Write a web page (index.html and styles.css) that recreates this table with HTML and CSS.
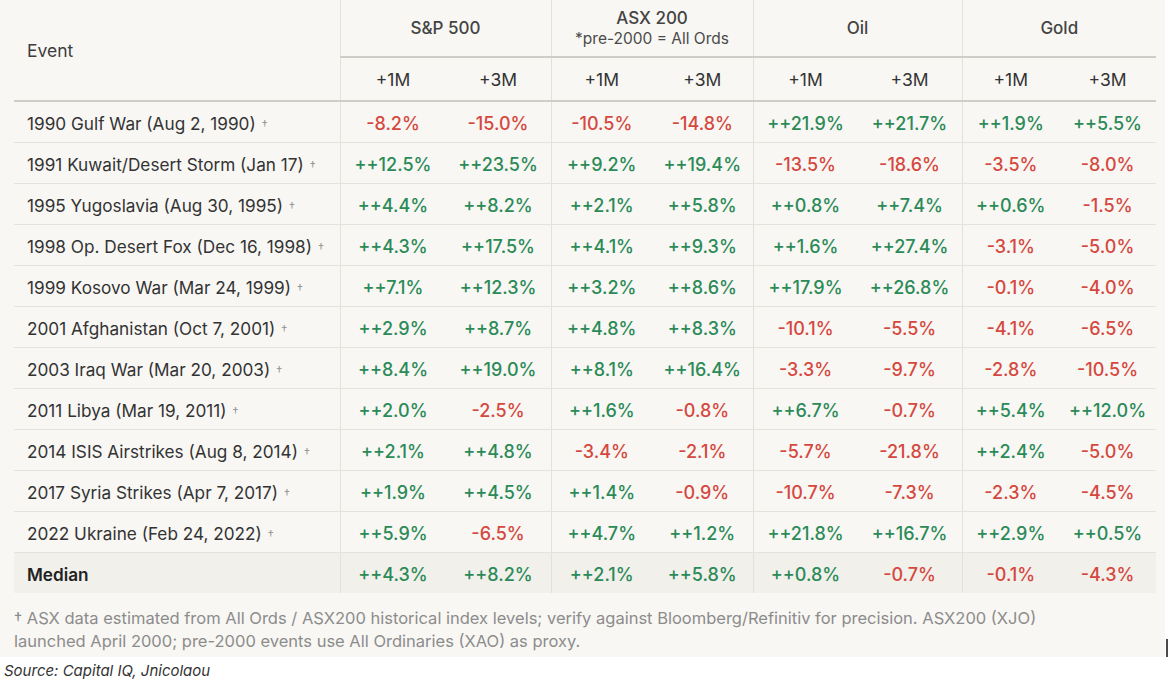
FILE: index.html
```html
<!DOCTYPE html>
<html lang="en">
<head>
<meta charset="utf-8">
<title>Markets after geopolitical events</title>
<link rel="stylesheet" href="styles.css">
</head>
<body>
<div class="page">
  <div class="panel">
    <table class="returns">
      <colgroup>
        <col class="c-event">
        <col class="c-sp"><col class="c-sp">
        <col class="c-asx"><col class="c-asx">
        <col class="c-oil"><col class="c-oil">
        <col class="c-gold"><col class="c-gold">
      </colgroup>
      <thead>
        <tr class="h-top">
          <th rowspan="2" class="event-h">Event</th>
          <th colspan="2" class="grp">S&amp;P 500</th>
          <th colspan="2" class="grp grp-two"><span class="grp-name">ASX 200</span><span class="grp-note">*pre-2000 = All Ords</span></th>
          <th colspan="2" class="grp">Oil</th>
          <th colspan="2" class="grp">Gold</th>
        </tr>
        <tr class="h-sub">
          <th class="sub l">+1M</th><th class="sub">+3M</th>
          <th class="sub l">+1M</th><th class="sub">+3M</th>
          <th class="sub l">+1M</th><th class="sub">+3M</th>
          <th class="sub l">+1M</th><th class="sub">+3M</th>
        </tr>
      </thead>
      <tbody>
        <tr><td class="ev">1990 Gulf War (Aug 2, 1990)<span class="dag">†</span></td>
          <td class="v neg l">-8.2%</td><td class="v neg">-15.0%</td>
          <td class="v neg l">-10.5%</td><td class="v neg">-14.8%</td>
          <td class="v pos l">++21.9%</td><td class="v pos">++21.7%</td>
          <td class="v pos l">++1.9%</td><td class="v pos">++5.5%</td></tr>
        <tr><td class="ev">1991 Kuwait/Desert Storm (Jan 17)<span class="dag">†</span></td>
          <td class="v pos l">++12.5%</td><td class="v pos">++23.5%</td>
          <td class="v pos l">++9.2%</td><td class="v pos">++19.4%</td>
          <td class="v neg l">-13.5%</td><td class="v neg">-18.6%</td>
          <td class="v neg l">-3.5%</td><td class="v neg">-8.0%</td></tr>
        <tr><td class="ev">1995 Yugoslavia (Aug 30, 1995)<span class="dag">†</span></td>
          <td class="v pos l">++4.4%</td><td class="v pos">++8.2%</td>
          <td class="v pos l">++2.1%</td><td class="v pos">++5.8%</td>
          <td class="v pos l">++0.8%</td><td class="v pos">++7.4%</td>
          <td class="v pos l">++0.6%</td><td class="v neg">-1.5%</td></tr>
        <tr><td class="ev">1998 Op. Desert Fox (Dec 16, 1998)<span class="dag">†</span></td>
          <td class="v pos l">++4.3%</td><td class="v pos">++17.5%</td>
          <td class="v pos l">++4.1%</td><td class="v pos">++9.3%</td>
          <td class="v pos l">++1.6%</td><td class="v pos">++27.4%</td>
          <td class="v neg l">-3.1%</td><td class="v neg">-5.0%</td></tr>
        <tr><td class="ev">1999 Kosovo War (Mar 24, 1999)<span class="dag">†</span></td>
          <td class="v pos l">++7.1%</td><td class="v pos">++12.3%</td>
          <td class="v pos l">++3.2%</td><td class="v pos">++8.6%</td>
          <td class="v pos l">++17.9%</td><td class="v pos">++26.8%</td>
          <td class="v neg l">-0.1%</td><td class="v neg">-4.0%</td></tr>
        <tr><td class="ev">2001 Afghanistan (Oct 7, 2001)<span class="dag">†</span></td>
          <td class="v pos l">++2.9%</td><td class="v pos">++8.7%</td>
          <td class="v pos l">++4.8%</td><td class="v pos">++8.3%</td>
          <td class="v neg l">-10.1%</td><td class="v neg">-5.5%</td>
          <td class="v neg l">-4.1%</td><td class="v neg">-6.5%</td></tr>
        <tr><td class="ev">2003 Iraq War (Mar 20, 2003)<span class="dag">†</span></td>
          <td class="v pos l">++8.4%</td><td class="v pos">++19.0%</td>
          <td class="v pos l">++8.1%</td><td class="v pos">++16.4%</td>
          <td class="v neg l">-3.3%</td><td class="v neg">-9.7%</td>
          <td class="v neg l">-2.8%</td><td class="v neg">-10.5%</td></tr>
        <tr><td class="ev">2011 Libya (Mar 19, 2011)<span class="dag">†</span></td>
          <td class="v pos l">++2.0%</td><td class="v neg">-2.5%</td>
          <td class="v pos l">++1.6%</td><td class="v neg">-0.8%</td>
          <td class="v pos l">++6.7%</td><td class="v neg">-0.7%</td>
          <td class="v pos l">++5.4%</td><td class="v pos">++12.0%</td></tr>
        <tr><td class="ev">2014 ISIS Airstrikes (Aug 8, 2014)<span class="dag">†</span></td>
          <td class="v pos l">++2.1%</td><td class="v pos">++4.8%</td>
          <td class="v neg l">-3.4%</td><td class="v neg">-2.1%</td>
          <td class="v neg l">-5.7%</td><td class="v neg">-21.8%</td>
          <td class="v pos l">++2.4%</td><td class="v neg">-5.0%</td></tr>
        <tr><td class="ev">2017 Syria Strikes (Apr 7, 2017)<span class="dag">†</span></td>
          <td class="v pos l">++1.9%</td><td class="v pos">++4.5%</td>
          <td class="v pos l">++1.4%</td><td class="v neg">-0.9%</td>
          <td class="v neg l">-10.7%</td><td class="v neg">-7.3%</td>
          <td class="v neg l">-2.3%</td><td class="v neg">-4.5%</td></tr>
        <tr><td class="ev">2022 Ukraine (Feb 24, 2022)<span class="dag">†</span></td>
          <td class="v pos l">++5.9%</td><td class="v neg">-6.5%</td>
          <td class="v pos l">++4.7%</td><td class="v pos">++1.2%</td>
          <td class="v pos l">++21.8%</td><td class="v pos">++16.7%</td>
          <td class="v pos l">++2.9%</td><td class="v pos">++0.5%</td></tr>
        <tr class="median"><td class="ev">Median</td>
          <td class="v pos l">++4.3%</td><td class="v pos">++8.2%</td>
          <td class="v pos l">++2.1%</td><td class="v pos">++5.8%</td>
          <td class="v pos l">++0.8%</td><td class="v neg">-0.7%</td>
          <td class="v neg l">-0.1%</td><td class="v neg">-4.3%</td></tr>
      </tbody>
    </table>
    <p class="footnote">† ASX data estimated from All Ords / ASX200 historical index levels; verify against Bloomberg/Refinitiv for precision. ASX200 (XJO)<br>launched April 2000; pre-2000 events use All Ordinaries (XAO) as proxy.</p>
  </div>
  <p class="source">Source: Capital IQ, Jnicolaou</p>
  <span class="caret"></span>
</div>
</body>
</html>
```
FILE: styles.css
```css
html, body {
  margin: 0;
  padding: 0;
  background: #ffffff;
}

body {
  font-family: "Inter", "Liberation Sans", sans-serif;
  color: #333333;
}

.page {
  position: relative;
  width: 1170px;
  height: 682px;
}

.panel {
  width: 1165px;
  height: 657px;
  background: #f8f7f3;
  padding: 0 0 0 14px;
  box-sizing: border-box;
  display: flex;
  flex-direction: column;
}

.returns {
  border-collapse: collapse;
  table-layout: fixed;
  width: 1142px;
}

.c-event { width: 326px; }
.c-sp { width: 105.5px; }
.c-asx { width: 101px; }
.c-oil { width: 104.5px; }
.c-gold { width: 97px; }

.returns th {
  font-weight: 400;
  color: #3e3e3e;
  padding: 0;
}

.h-top { height: 57px; }
.h-sub { height: 44px; }

.event-h {
  text-align: left;
  padding-left: 13px !important;
  font-size: 17.5px;
  border-bottom: 2px solid #cfcdc8;
  border-right: 1px solid #e3e1dc;
  vertical-align: middle;
}

.grp {
  font-size: 17px;
  font-weight: 500 !important;
  color: #444444 !important;
  border-bottom: 2px solid #cfcdc8;
  border-right: 1px solid #e3e1dc;
  vertical-align: middle;
}

.grp:last-child { border-right: none; }

.grp-name {
  display: block;
  font-size: 17px;
  line-height: 21px;
}

.grp-note {
  display: block;
  font-size: 15.5px;
  font-weight: 400;
  line-height: 20px;
  color: #4a4a4a;
}

.sub {
  font-size: 17.5px;
  text-align: center;
  border-bottom: 2px solid #cfcdc8;
  color: #333333 !important;
}

.sub:not(.l) { border-right: 1px solid #e3e1dc; }
.h-sub .sub:last-child { border-right: none; }

.returns tbody tr { height: 41px; }

.returns td {
  padding: 3px 0 0 0;
  border-bottom: 1px solid #e5e3de;
  vertical-align: middle;
}

.ev {
  font-size: 17.2px;
  color: #333333;
  padding-left: 13px !important;
  border-right: 1px solid #e3e1dc;
  white-space: nowrap;
}

.dag {
  font-size: 12px;
  color: #999999;
  margin-left: 6px;
  vertical-align: 1px;
}

.v {
  text-align: center;
  font-size: 18px;
  font-weight: 500;
}

.v:not(.l) { border-right: 1px solid #e3e1dc; }
.returns tr .v:last-child { border-right: none; }

.pos { color: #2b8a58; }
.neg { color: #d5483f; }

.median td {
  background: #f1f0eb;
  border-bottom: none;
}

.median .ev {
  font-weight: 600;
  color: #222222;
}

.footnote {
  margin: 0;
  padding-top: 14px;
  font-size: 16.5px;
  line-height: 23px;
  color: #8c8c8c;
}

.source {
  margin: 0;
  padding: 4px 0 0 4px;
  font-size: 15px;
  font-style: italic;
  color: #333333;
}

.caret {
  position: absolute;
  left: 1166px;
  top: 639px;
  width: 2px;
  height: 18px;
  background: #4a4a4a;
}
```
